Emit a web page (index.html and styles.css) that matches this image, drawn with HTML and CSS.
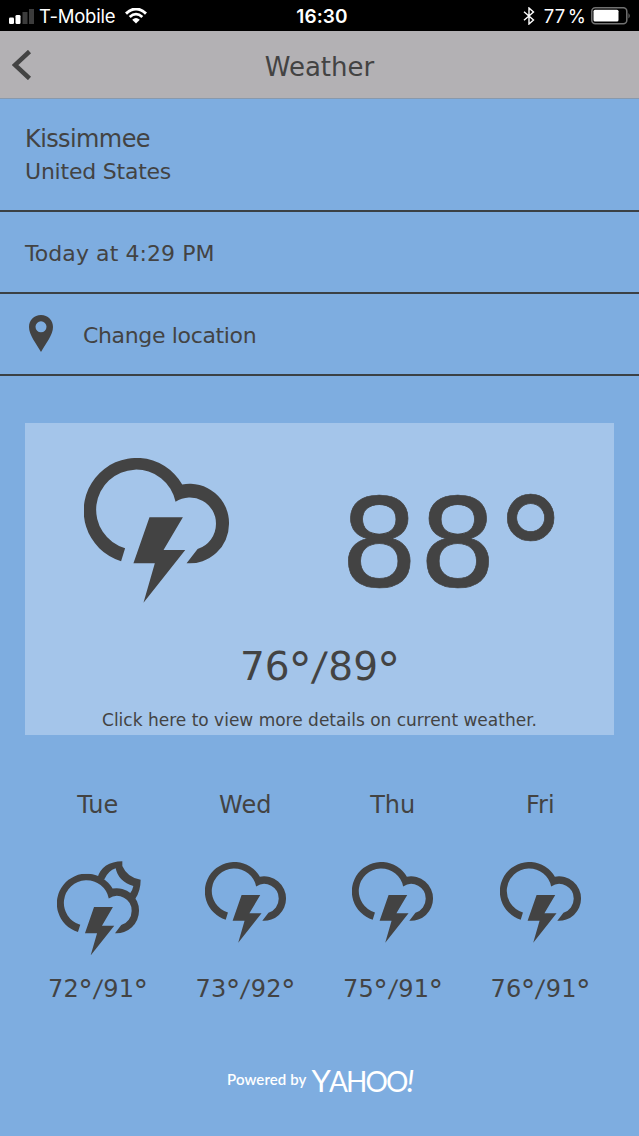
FILE: index.html
```html
<!DOCTYPE html>
<html lang="en">
<head>
<meta charset="utf-8">
<title>Weather</title>
<link rel="stylesheet" href="styles.css">
</head>
<body>
<svg class="defs" aria-hidden="true">
  <symbol id="thunder" viewBox="44 54 434 434">
    <path d="M155 363A158 158 0 1 1 338 133A118 118 0 0 1 478 251A118 118 0 0 1 351 369L384 326A78 78 0 0 0 439 251A78 78 0 0 0 318 185A120 120 0 1 0 167 324Z"/>
    <path d="M240 231H340L282 329H347L222 487L256 369H192Z"/>
  </symbol>
</svg>
<div class="status">
  <div class="carrier">
    <svg class="signal" viewBox="0 0 25 16"><rect x="0" y="9.5" width="5" height="6.5" rx="1.3"/><rect x="6.5" y="7" width="5" height="9" rx="1.3"/><path class="dim" d="M13.5 4h5v12h-5zM20 1h5v15h-5z"/></svg>
    <span class="carrier-name">T-Mobile</span>
    <svg class="wifi" viewBox="0 0 22 16"><path d="M1 5.6Q11-3.6 21 5.6" stroke-width="3"/><path d="M4.7 9Q11 3.3 17.3 9" stroke-width="2.8"/><path class="dot" d="M7.2 11.7Q11 8.4 14.8 11.7L11 15.5Z"/></svg>
  </div>
  <span class="clock">16:30</span>
  <div class="power">
    <svg class="bluetooth" viewBox="0 0 12 18"><path d="M1 4.7L10.5 13L6 17V1L10.5 5L1 13.3"/></svg>
    <span class="percent">77 %</span>
    <svg class="battery" viewBox="0 0 40 18"><rect class="shell" x=".8" y=".8" width="35" height="16" rx="3.5"/><rect class="charge" x="2.5" y="2.8" width="25" height="11.8" rx="1.5"/><path class="tip" d="M37.5 6Q40 8.8 37.5 11.5Z"/></svg>
  </div>
</div>
<header class="header">
  <svg class="back" viewBox="0 0 20 30"><path d="M17.5 1.5L3 15L17.5 28.5"/></svg>
  <h1 class="title">Weather</h1>
</header>
<main>
  <section class="row place"><span class="city">Kissimmee</span><span class="country">United States</span></section>
  <section class="row"><span class="time">Today at 4:29 PM</span></section>
  <section class="row change"><svg class="pin" viewBox="0 0 24 37"><path fill-rule="evenodd" d="M12 0C5 0 0 5 0 12C0 20 7 28 12 37C17 28 24 20 24 12C24 5 19 0 12 0ZM12 6.3A5.5 5.5 0 1 1 12 17.3A5.5 5.5 0 1 1 12 6.3Z"/></svg><span class="change-label">Change location</span></section>
  <section class="card">
    <div class="now">
      <svg class="now-icon"><use href="#thunder"/></svg>
      <span class="now-temp">88<span class="degree">°</span></span>
    </div>
    <div class="range">76<span class="degree">°</span><span class="slash">/</span>89<span class="degree">°</span></div>
    <div class="details">Click here to view more details on current weather.</div>
  </section>
  <section class="forecast">
    <div class="day"><span class="name">Tue</span>
      <svg class="icon night" viewBox="54 242 252 282"><path d="M175 293Q190 244 250 243V257Q265 292 305 298Q305 332 288 357L272 341Q281 330 283 317Q238 304 230 264Q208 271 196 297Z"/><use href="#thunder" x="54" y="280" width="246" height="246"/></svg>
      <span class="temps">72<span class="degree">°</span><span class="slash">/</span>91<span class="degree">°</span></span></div>
    <div class="day"><span class="name">Wed</span><svg class="icon"><use href="#thunder"/></svg><span class="temps">73<span class="degree">°</span><span class="slash">/</span>92<span class="degree">°</span></span></div>
    <div class="day"><span class="name">Thu</span><svg class="icon"><use href="#thunder"/></svg><span class="temps">75<span class="degree">°</span><span class="slash">/</span>91<span class="degree">°</span></span></div>
    <div class="day"><span class="name">Fri</span><svg class="icon"><use href="#thunder"/></svg><span class="temps">76<span class="degree">°</span><span class="slash">/</span>91<span class="degree">°</span></span></div>
  </section>
  <footer class="credit"><span class="powered">Powered by</span><span class="yahoo">Y<span class="yahoo-small">AHOO</span><i>!</i></span></footer>
</main>
</body>
</html>
```
FILE: styles.css
```css
* { box-sizing: border-box; }
body { margin: 0; width: 639px; height: 1136px; overflow: hidden; background: #7eade0; color: #434343; font-family: "DejaVu Sans", Verdana, sans-serif; }
svg { display: block; fill: currentColor; flex: none; }
.defs { display: none; }
.status { height: 31px; background: #000; color: #fff; font-family: Inter, sans-serif; display: grid; grid-template-columns: 1fr auto 1fr; align-items: center; padding: 1px 8px 0 9px; line-height: 24px; }
.carrier, .power { display: flex; align-items: center; }
.power { justify-content: flex-end; }
.signal { width: 25px; height: 16px; }
.dim { fill: #3c3c3c; }
.carrier-name { font-size: 18.5px; margin: 0 0 0 5px; letter-spacing: -.2px; }
.wifi { width: 22px; height: 16px; margin-left: 10px; fill: none; stroke: #fff; }
.dot { fill: #fff; stroke: none; }
.clock { font-size: 19px; font-weight: 600; margin: 1px -2px 0 2px; letter-spacing: .1px; }
.bluetooth { width: 12px; height: 18px; fill: none; stroke: #fff; stroke-width: 1.4; }
.percent { font-size: 18.5px; margin: 0 5px 0 9px; white-space: nowrap; word-spacing: -2.5px; }
.battery { width: 40px; height: 18px; }
.shell { fill: none; stroke: #717171; stroke-width: 1.5; }
.tip { fill: #717171; }
.header { height: 68px; background: #b3b1b4; border-bottom: 1px solid #8799ad; display: grid; grid-template-columns: 40px 1fr 40px; align-items: center; }
.back { width: 20px; height: 30px; margin-left: 12px; fill: none; stroke: #434343; stroke-width: 4.5; }
.title { margin: 4px 0 0; font-size: 26px; line-height: 32px; font-weight: 400; text-align: center; }
.row { height: 82px; border-bottom: 2px solid #3b4145; padding: 2px 25px 0; display: flex; align-items: center; font-size: 22px; }
.place { height: 113px; flex-direction: column; align-items: flex-start; padding-top: 24px; line-height: 33px; }
.city { font-size: 24px; letter-spacing: -.6px; }
.country { letter-spacing: -.22px; line-height: 32px; }
.time { letter-spacing: .08px; }
.change-label { letter-spacing: -.35px; }
.pin { width: 24px; height: 37px; margin: -4px 30px 0 4px; }
.card { margin: 47px 25px 0 25px; height: 312px; background: #a4c5ea; }
.now { height: 214px; display: flex; justify-content: space-between; padding: 35px 50px 0 59px; }
.now-icon { width: 145px; height: 145px; }
.now-temp { font-size: 123.5px; line-height: 171px; white-space: nowrap; -webkit-text-stroke: .7px #434343; }
.degree { font-size: 1.22em; line-height: 0; vertical-align: -.14em; margin: 0 -.028em; }
.slash { display: inline-block; line-height: 1; margin: 0 .058em; transform: skewX(-7deg); }
.range { font-size: 39px; line-height: 60px; text-align: center; }
.details { font-size: 17px; line-height: 24px; margin-top: 11px; text-align: center; white-space: nowrap; }
.forecast { display: grid; grid-template-columns: repeat(4, 147.5px); margin: 52px 24px 0; }
.day { display: grid; grid-template-rows: 75px 107px 40px; justify-items: center; font-size: 24px; }
.name { line-height: 36px; }
.icon { width: 81px; height: 81px; }
.night { width: 84px; height: 94px; margin: -1px 0 0 3px; }
.temps { line-height: 40px; white-space: nowrap; letter-spacing: .2px; }
.credit { margin: 52px 0 0 227px; display: flex; align-items: center; color: #fff; height: 36px; font-family: Lato, sans-serif; }
.powered { font-size: 15px; font-weight: 600; letter-spacing: .1px; }
.yahoo { font-size: 31px; line-height: 36px; margin: 2px 0 0 5px; white-space: nowrap; letter-spacing: -1.9px; }
.yahoo-small { font-size: 28px; }
```
